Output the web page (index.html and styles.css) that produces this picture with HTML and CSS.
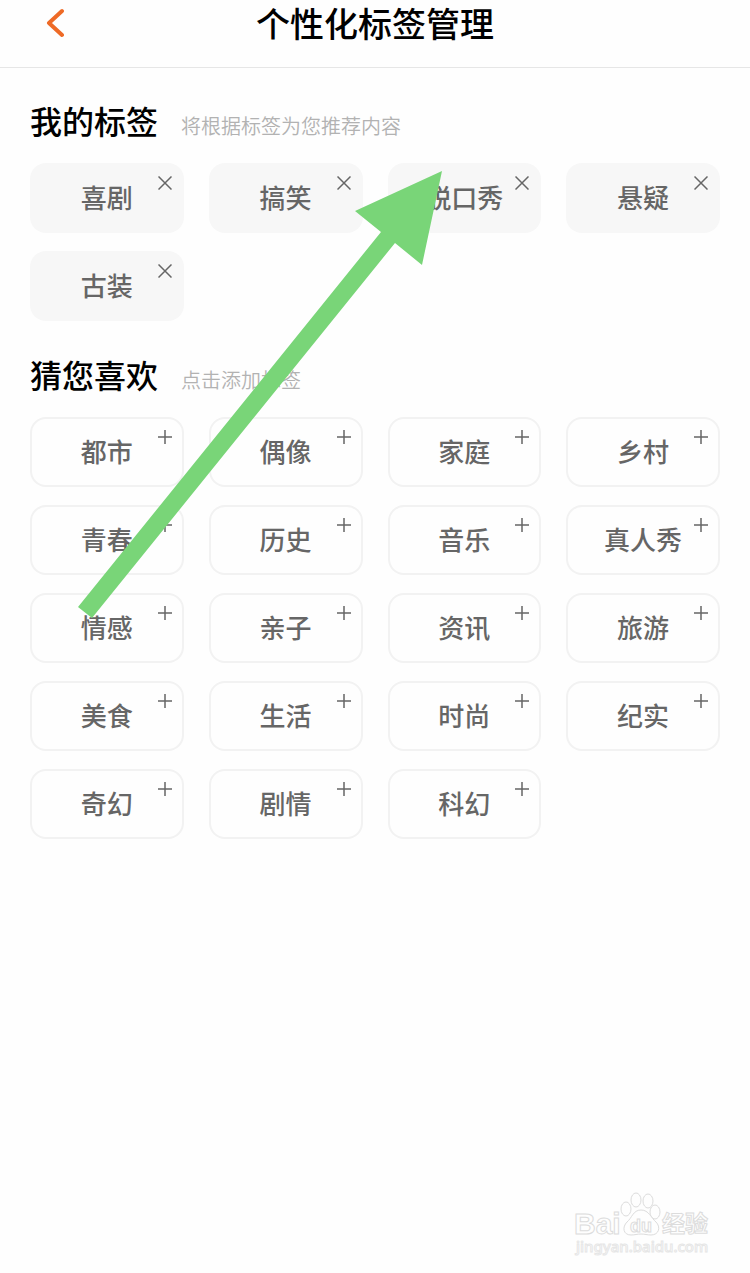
FILE: index.html
```
<!DOCTYPE html>
<html lang="zh-CN">
<head>
    <meta charset="UTF-8">
    <meta name="viewport" content="width=device-width, initial-scale=1">
    <title>个性化标签管理</title>
    <link rel="stylesheet" href="styles.css">
</head>
<body>
<svg class="symbols" aria-hidden="true">
    <symbol id="close" viewBox="0 0 14 14"><path d="M.5.5l13 13M13.5.5L.5 13.5"/></symbol>
    <symbol id="add" viewBox="0 0 14 14"><path d="M7 0v14M0 7h14"/></symbol>
</svg>

<header class="header">
    <button class="back" type="button" aria-label="返回">
        <svg viewBox="0 0 18 30" width="18" height="30"><path d="M16 3L3 15l13 12"/></svg>
    </button>
    <h1>个性化标签管理</h1>
</header>

<main class="main">
    <section class="section">
        <div class="section_head">
            <h2>我的标签</h2>
            <p>将根据标签为您推荐内容</p>
        </div>
        <div class="tags tags_mine">
            <button type="button">喜剧<svg><use href="#close"/></svg></button>
            <button type="button">搞笑<svg><use href="#close"/></svg></button>
            <button type="button">脱口秀<svg><use href="#close"/></svg></button>
            <button type="button">悬疑<svg><use href="#close"/></svg></button>
            <button type="button">古装<svg><use href="#close"/></svg></button>
        </div>
    </section>

    <section class="section">
        <div class="section_head">
            <h2>猜您喜欢</h2>
            <p>点击添加标签</p>
        </div>
        <div class="tags tags_more">
            <button type="button">都市<svg><use href="#add"/></svg></button>
            <button type="button">偶像<svg><use href="#add"/></svg></button>
            <button type="button">家庭<svg><use href="#add"/></svg></button>
            <button type="button">乡村<svg><use href="#add"/></svg></button>
            <button type="button">青春<svg><use href="#add"/></svg></button>
            <button type="button">历史<svg><use href="#add"/></svg></button>
            <button type="button">音乐<svg><use href="#add"/></svg></button>
            <button type="button">真人秀<svg><use href="#add"/></svg></button>
            <button type="button">情感<svg><use href="#add"/></svg></button>
            <button type="button">亲子<svg><use href="#add"/></svg></button>
            <button type="button">资讯<svg><use href="#add"/></svg></button>
            <button type="button">旅游<svg><use href="#add"/></svg></button>
            <button type="button">美食<svg><use href="#add"/></svg></button>
            <button type="button">生活<svg><use href="#add"/></svg></button>
            <button type="button">时尚<svg><use href="#add"/></svg></button>
            <button type="button">纪实<svg><use href="#add"/></svg></button>
            <button type="button">奇幻<svg><use href="#add"/></svg></button>
            <button type="button">剧情<svg><use href="#add"/></svg></button>
            <button type="button">科幻<svg><use href="#add"/></svg></button>
        </div>
    </section>
</main>

<!-- 指向箭头 -->
<svg class="arrow" viewBox="0 0 364 447" width="364" height="447" aria-hidden="true">
    <path d="M364 0L277 40l26 21L0 436l14 11L317 72l27 22z"/>
</svg>

<!-- 水印 -->
<svg class="watermark" viewBox="0 0 140 66" width="140" height="66" role="img" aria-label="Baidu经验">
    <text x="2" y="42" font-size="30">Bai</text>
    <ellipse cx="54" cy="17" rx="5" ry="7"/>
    <ellipse cx="64" cy="8" rx="5" ry="7"/>
    <ellipse cx="76" cy="9" rx="5" ry="7"/>
    <ellipse cx="83" cy="20" rx="5" ry="7"/>
    <path d="M69 18c-8 0-9 8-14 12-5 5-4 13 4 13 4 0 6-1 10-1s6 1 10 1c8 0 10-8 5-13-5-4-7-12-15-12z"/>
    <text x="58" y="40" font-size="18">du</text>
    <text class="cjk" x="90" y="40" font-size="23">经验</text>
    <text class="watermark_url" x="4" y="60" font-size="15">jingyan.baidu.com</text>
</svg>
</body>
</html>
```
FILE: styles.css
```
* {
    margin: 0;
    padding: 0;
    box-sizing: border-box;
}

body {
    position: relative;
    min-height: 100vh;
    background: #fefefe;
    color: #000;
    font-family: "Noto Sans CJK SC", sans-serif;
}

button {
    border: none;
    background: none;
    font: inherit;
    cursor: pointer;
}

.symbols {
    display: none;
}

/* 顶部 */
.header {
    display: grid;
    grid-template-columns: 64px 1fr 64px;
    align-items: center;
    padding-bottom: 22px;
    border-bottom: 1px solid #e6e6e6;
}

.header h1 {
    font-size: 34px;
    font-weight: 500;
    line-height: 45px;
    text-align: center;
}

.back {
    display: flex;
    justify-content: flex-end;
}

.back svg {
    fill: none;
    stroke: #ee6a26;
    stroke-width: 4;
    stroke-linecap: round;
    stroke-linejoin: round;
}

/* 标签 */
.main {
    padding: 31px 30px;
}

.section {
    margin-bottom: 32px;
}

.section_head {
    display: flex;
    align-items: baseline;
    gap: 23px;
    margin-bottom: 22px;
}

.section_head h2 {
    font-size: 32px;
    font-weight: 500;
    line-height: 42px;
}

.section_head p {
    color: #b2b2b2;
    font-size: 20px;
    font-weight: 350;
    line-height: 28px;
}

.tags {
    display: grid;
    grid-template-columns: repeat(4, 1fr);
    gap: 18px 25px;
}

.tags button {
    position: relative;
    height: 70px;
    padding-bottom: 4px;
    border-radius: 16px;
    color: #666;
    font-size: 26px;
    font-weight: 500;
}

.tags svg {
    position: absolute;
    top: 13px;
    right: 12px;
    width: 14px;
    height: 14px;
    stroke: #666;
    stroke-width: 1.5;
}

.tags_mine button {
    background: #f7f7f7;
}

.tags_more button {
    border: 2px solid #f2f2f2;
}

.tags_more svg {
    top: 11px;
    right: 10px;
}

.arrow {
    position: absolute;
    top: 171px;
    left: 78px;
    fill: #79d578;
    pointer-events: none;
}

.watermark {
    position: absolute;
    right: 38px;
    bottom: 15px;
    overflow: visible;
    fill: #fefefe;
    stroke: #dcdcdc;
    font-family: "Liberation Sans", sans-serif;
    font-weight: 700;
}

.watermark .cjk {
    font-family: "Noto Sans CJK SC", sans-serif;
}

.watermark_url {
    stroke: #e6e6e6;
    font-family: "Noto Sans", sans-serif;
    font-weight: 500;
}
```
